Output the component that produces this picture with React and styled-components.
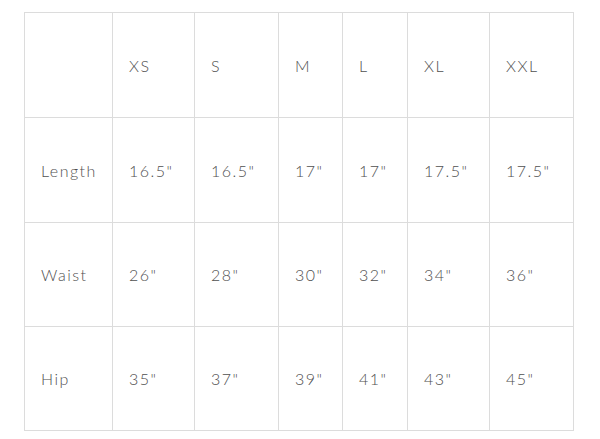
import React from "react";
import styled, {createGlobalStyle} from "styled-components";

const GlobalStyle = createGlobalStyle`
  html, body {
    margin: 0;
    background: #fff;
  }
`;

const sizes = ["XS", "S", "M", "L", "XL", "XXL"];
const colWidths = [88, 82, 84, 64, 65, 82, 84];

const rows = [
    {label: "Length", values: ['16.5"', '16.5"', '17"', '17"', '17.5"', '17.5"']},
    {label: "Waist", values: ['26"', '28"', '30"', '32"', '34"', '36"']},
    {label: "Hip", values: ['35"', '37"', '39"', '41"', '43"', '45"']},
];

export default function App() {
    return (
        <Page>
            <GlobalStyle/>
            <SizeTable>
                <colgroup>
                    {colWidths.map((w, i) => (
                        <col key={i} style={{width: w}}/>
                    ))}
                </colgroup>
                <tbody>
                <Row $height={105}>
                    <Cell/>
                    {sizes.map((s) => (
                        <Cell key={s}>{s}</Cell>
                    ))}
                </Row>
                {rows.map((r, i) => (
                    <Row key={r.label} $height={i === 0 ? 105 : 104}>
                        <Cell>{r.label}</Cell>
                        {r.values.map((v, j) => (
                            <Cell key={j}>{v}</Cell>
                        ))}
                    </Row>
                ))}
                </tbody>
            </SizeTable>
        </Page>
    );
}

const Page = styled.div`
  padding: 12px 0 0 24px;
`;

const SizeTable = styled.table`
  border-collapse: collapse;
  table-layout: fixed;
  width: 549px;
  font-family: Lato, "Noto Sans", sans-serif;
  font-weight: 300;
  font-size: 16px;
  color: #505050;
`;

const Row = styled.tr`
  height: ${(p) => p.$height}px;
`;

const Cell = styled.td`
  border: 1px solid #dcdcdc;
  padding: 0 0 0 16px;
  vertical-align: middle;
  text-align: left;
  letter-spacing: 1.5px;
  white-space: nowrap;
`;
